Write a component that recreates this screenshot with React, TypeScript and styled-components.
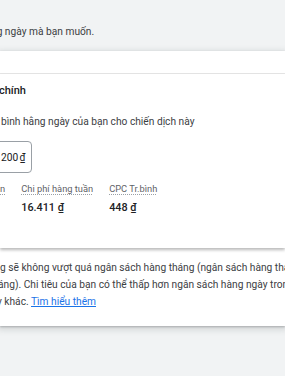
import React from "react";
import styled, { createGlobalStyle } from "styled-components";

const GlobalStyle = createGlobalStyle`
  html, body {
    margin: 0;
    padding: 0;
    background: #f1f3f4;
    font-family: Roboto, "Noto Sans", Arial, sans-serif;
    overflow: hidden;
  }
`;

const Page = styled.div`
  width: 285px;
  height: 376px;
  overflow: hidden;
  background: #f1f3f4;
  color: #3c4043;
`;

const Intro = styled.div`
  height: 51px;
  box-sizing: border-box;
  padding-top: 24px;
  font-size: 10.2px;
  line-height: 16px;
  white-space: nowrap;
  margin-left: -9px;
  color: #3c4043;
`;

// Expansion panel

const Panel = styled.div`
  background: #fff;
  box-shadow: 0 1px 2px rgba(60, 64, 67, 0.3), 0 2px 6px 2px rgba(60, 64, 67, 0.15);
`;

const PanelHeader = styled.div`
  height: 22px;
  border-bottom: 1px solid #e6e6e6;
`;

const PanelBody = styled.div`
  position: relative;
  z-index: 1;
  height: 174px;
  box-sizing: border-box;
  padding-top: 9px;
  background: #fff;
  box-shadow: 0 2px 3px rgba(0, 0, 0, 0.28);
  white-space: nowrap;
  overflow: hidden;
`;

const Title = styled.div`
  font-size: 11px;
  line-height: 16px;
  font-weight: 500;
  color: #202124;
  margin-left: -1px;
`;

const Hint = styled.div`
  margin-top: 15px;
  font-size: 10.2px;
  line-height: 16px;
  color: #3c4043;
  margin-left: 1px;
`;

const BudgetInput = styled.div`
  margin-top: 11px;
  margin-left: -12px;
  width: 44px;
  height: 32px;
  box-sizing: border-box;
  border: 1px solid #9aa0a6;
  border-radius: 4px;
  padding-left: 12px;
  display: flex;
  align-items: center;
  font-size: 10.2px;
  color: #202124;
`;

const Stats = styled.div`
  display: flex;
  gap: 16px;
  margin-top: 9px;
  margin-left: -80px;
`;

const Stat = styled.div`
  display: flex;
  flex-direction: column;
  gap: 4px;
`;

const StatLabel = styled.span`
  font-size: 9.3px;
  line-height: 14px;
  color: #5f6368;
  text-decoration: underline dotted #9aa0a6;
  text-underline-offset: 2px;
`;

const StatValue = styled.span`
  font-size: 10.8px;
  line-height: 16px;
  font-weight: 500;
  color: #202124;
`;

const PanelFooter = styled.div`
  padding: 11px 0 16px;
  font-size: 10.2px;
  line-height: 17px;
  color: #3c4043;
  white-space: nowrap;
  overflow: hidden;
`;

const Line = styled.div<{ $shift?: number }>`
  margin-left: ${p => p.$shift ?? 0}px;
`;

const Link = styled.a`
  color: #1a73e8;
  text-decoration: underline;
`;

const stats = [
  { label: "Lượt nhấp hàng tuần", value: "37" },
  { label: "Chi phí hàng tuần", value: "16.411 ₫" },
  { label: "CPC Tr.bình", value: "448 ₫" }
];

const App: React.FC = () => {
  return (
    <Page>
      <GlobalStyle />
      <Intro>ng ngày mà bạn muốn.</Intro>
      <Panel>
        <PanelHeader />
        <PanelBody>
          <Title>chính</Title>
          <Hint>bình hằng ngày của bạn cho chiến dịch này</Hint>
          <BudgetInput>200{"\u202F"}₫</BudgetInput>
          <Stats>
            {stats.map(s => (
              <Stat key={s.label}>
                <StatLabel>{s.label}</StatLabel>
                <StatValue>{s.value}</StatValue>
              </Stat>
            ))}
          </Stats>
        </PanelBody>
        <PanelFooter>
          <Line>g sẽ không vượt quá ngân sách hàng tháng (ngân sách hàng tháng</Line>
          <Line $shift={-2}>áng). Chi tiêu của bạn có thể thấp hơn ngân sách hàng ngày trong</Line>
          <Line $shift={-3}>
            y khác. <Link href="#">Tìm hiểu thêm</Link>
          </Line>
        </PanelFooter>
      </Panel>
    </Page>
  );
};

export default App;
